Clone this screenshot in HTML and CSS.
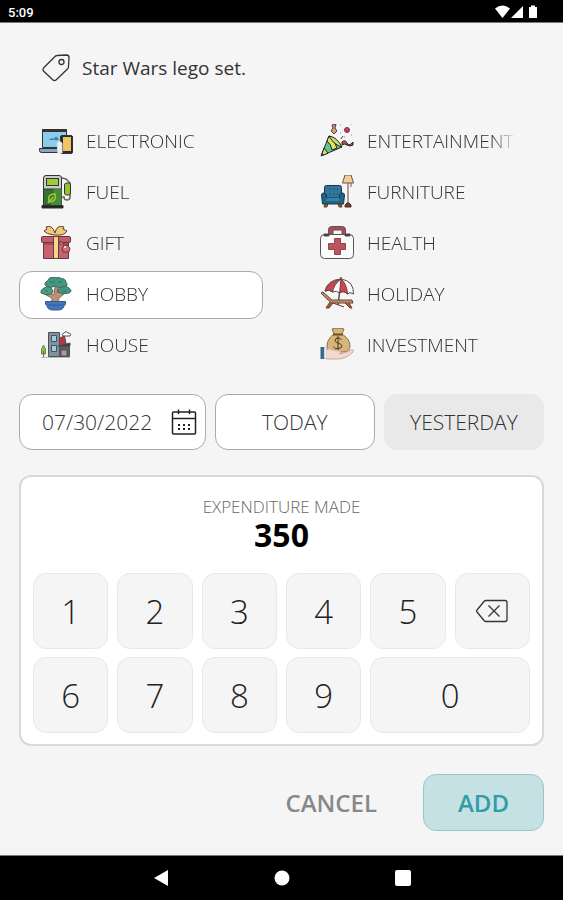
FILE: index.html
```
<!DOCTYPE html>
<html lang="en">
  <head>
    <meta charset="UTF-8" />
    <meta name="viewport" content="width=device-width, initial-scale=1.0" />
    <title>Add expenditure</title>
    <link rel="stylesheet" href="styles.css">
  </head>
  <body>
    <header class="status-bar">
      <span class="clock">5:09</span>
      <svg class="status-icons" width="44" height="14" viewBox="0 0 44 14" fill="#fff">
        <path d="M0 3.500Q7.500-2.500 15 3.500L7.500 13z"/>
        <path d="M28 1v12H16z"/>
        <path d="M34 2h2V0.500h4V2h2v11h-8z"/>
      </svg>
    </header>

    <main class="content">
      <div class="description">
        <svg width="28" height="28" viewBox="0 0 28 28" fill="none" stroke="#333" stroke-width="1.300" stroke-linejoin="round">
          <path d="M15 1.500L24.500 1Q27 1 27 3.500L26.500 12.500Q26.500 14 25.500 15L14 26Q12.500 27 11 26L1.500 17Q0.500 15.500 1.500 14L13 2.500Q14 1.500 15 1.500z"/>
          <circle cx="19.500" cy="8" r="2.500"/>
        </svg>
        <input class="description-input" type="text" value="Star Wars lego set." aria-label="Description">
      </div>

      <div class="categories" role="radiogroup" aria-label="Category">
        <label class="category">
          <input type="radio" name="category" value="electronic">
          <svg class="icon" viewBox="0 0 34 34" stroke="#333" stroke-width="1">
            <path d="M3.500 5.500h24v18h-24z" fill="#8accea"/>
            <path d="M3.500 5.500h24v2h-24z" fill="#333"/>
            <path d="M10 16q2-3 5-1 2-5 5 1z" fill="#467f98" stroke="none"/>
            <path d="M0.500 24.500h20v2q0 2-2 2h-16q-2 0-2-2z" fill="#8ba3c4"/>
            <rect x="21.500" y="11.500" width="12" height="18" rx="1.500" fill="#2c2c36"/>
            <path d="M24 13h8v14h-8z" fill="#f0c465" stroke="none"/>
            <path d="M18 19l2-2 3 2v10h-4z" fill="#eef2f6" stroke="#ddd"/>
          </svg>
          <span class="category-name">ELECTRONIC</span>
        </label>
        <label class="category">
          <input type="radio" name="category" value="entertainment">
          <svg class="icon" viewBox="0 0 34 34" stroke="#222" stroke-width="1">
            <path d="M1 32L9 12Q16 15 22 23z" fill="#62c892"/>
            <path d="M7 17l2-5q6 4 8 12l-5 2q-1-6-5-9zM4 24l4 5-4 2-2-1z" fill="#dfe267"/>
            <path d="M9 12q8 1 13 11-8-2-13-11z" fill="#c6e068"/>
            <path d="M12 1l4-1-1 4 2 3-3 3-3-3 2-3z" fill="#d9a351" stroke="#4b3668"/>
            <circle cx="27" cy="6" r="2.500" fill="#c33f63" stroke="#8a2a4a"/>
            <path d="M22 18q3-3 5 1t6-1l0 3q-3 2-6 0t-5 0z" fill="#b95a50"/>
            <path d="M20 1h1M31 0h1M20 9h1M31 11h1M24 13h1" stroke="#8f86ad" stroke-width="1"/>
            <path d="M21 15l2-3" stroke="#444"/>
          </svg>
          <span class="category-name">ENTERTAINMENT</span>
        </label>

        <label class="category">
          <input type="radio" name="category" value="fuel">
          <svg class="icon" viewBox="0 0 34 34" stroke="#333" stroke-width="1">
            <path d="M4.500 3q0-2.500 2.500-2.500h13q2.500 0 2.500 2.500v27h-18z" fill="#c9cdce"/>
            <path d="M4.500 14h18v16h-18z" fill="#35722f"/>
            <path d="M15 14h7.500v16H12z" fill="#478b38" stroke="none"/>
            <rect x="7.500" y="3.500" width="12" height="7" fill="#9fcb38"/>
            <path d="M3 30.500h21v2.500H3z" fill="#222"/>
            <path d="M10 26q-2-7 6-7 2 7-5 8M9 28l5-6" fill="none" stroke="#a0c83c" stroke-width="1.500"/>
            <path d="M23 3l4 1 4 4v14q0 3-3 3t-3-3H23" fill="none" stroke="#666" stroke-width="1.500"/>
            <path d="M25.500 10q0-2 2-2h2q2 0 2 2v8q0 2-2 2h-2q-2 0-2-2z" fill="#91c534"/>
          </svg>
          <span class="category-name">FUEL</span>
        </label>
        <label class="category">
          <input type="radio" name="category" value="furniture">
          <svg class="icon" viewBox="0 0 34 34" stroke="#17384a" stroke-width="1">
            <path d="M5 28l-1 4h3l1-4zM18 28l1 4h3l-1-4z" fill="#9a5b32" stroke="#6b3d24"/>
            <rect x="4.500" y="10.500" width="17" height="17" rx="2" fill="#2f7699"/>
            <path d="M1.500 20q0-2 2-2t3 2v3h13v-3q1-2 3-2t2 2l-1 9h-21z" fill="#216384"/>
            <path d="M6.500 23h13v3h-13z" fill="#3382a5" stroke="none"/>
            <path d="M9 14h1M13 14h1M17 14h1M9 19h1M13 19h1M17 19h1" stroke="#12445e"/>
            <path d="M28 7v22" stroke="#b19a99" stroke-width="2"/>
            <path d="M25 0h6l2.500 8h-11z" fill="#f0ce98" stroke="#765037"/>
            <path d="M31 8v4" stroke="#765037"/>
            <path d="M25 32v-2l2-2h2l2 2v2z" fill="#6d3e2f" stroke="#4b2b25"/>
          </svg>
          <span class="category-name">FURNITURE</span>
        </label>

        <label class="category">
          <input type="radio" name="category" value="gift">
          <svg class="icon" viewBox="0 0 34 34" stroke="#623b3d" stroke-width="1">
            <path d="M15 9Q7 8 5 5L8 3 7 1q6-3 9 6 2-9 9-6l-1 2 4 2q-3 5-11 4z" fill="#eecb72"/>
            <path d="M4.500 16h25v16.500h-25z" fill="#c9626f"/>
            <path d="M5 16h24v3H5z" fill="#a94b5c" stroke="none"/>
            <rect x="2.500" y="10.500" width="29" height="6" rx="1" fill="#c75b6b"/>
            <path d="M14.500 10.500h5v22h-5z" fill="#f3d788"/>
            <path d="M19 15q5 0 6 5l3-1 3 3-1 4h-6l-1-4 2-2" fill="#d5707b"/>
            <circle cx="26" cy="21" r="1" fill="#fff" stroke="none"/>
          </svg>
          <span class="category-name">GIFT</span>
        </label>
        <label class="category">
          <input type="radio" name="category" value="health">
          <svg class="icon" viewBox="0 0 34 34" stroke="#555" stroke-width="1">
            <path d="M8.500 10V4q0-3.500 3-3.500h11q3 0 3 3.500v6h-3.500V5q0-1-1-1h-7q-1 0-1 1v5z" fill="#b04a5a"/>
            <rect x="0.500" y="8.500" width="33" height="24" rx="4" fill="#fcfcfc"/>
            <path d="M4 8h5v2H4zM25 8h5v2h-5z" fill="#333"/>
            <path d="M14.500 12.500h6v5h5v6h-5v5h-6v-5h-6v-6h6z" fill="#bd5560" stroke="#8d4650"/>
          </svg>
          <span class="category-name">HEALTH</span>
        </label>

        <label class="category">
          <input type="radio" name="category" value="hobby" checked>
          <svg class="icon" viewBox="0 0 34 34" stroke="#42685f" stroke-width="1">
            <path d="M11 26q4-4 0-6l-4-2 2-3 6 3 1-9h3l-1 7 4-2 3 3-5 4q-2 2 2 5z" fill="#bd9272" stroke="#8a6b57"/>
            <path d="M7 9Q4 6 9 3.500q1-4 6-3 5-2 7 1 5 0 5 4 3 3-2 4.500-5 2-9-1-5 3-9 0z" fill="#419880"/>
            <path d="M2 16q-1-3 3-5 4-3 7 0 4 4 0 6-5 2-10-1z" fill="#47a084"/>
            <path d="M19 15q-1-4 4-5 4-2 7 1 4 3 0 5-6 2-11-1z" fill="#419880"/>
            <path d="M11 5h5M19 5h4M6 14h3M24 14h3" stroke="#2f7465"/>
            <path d="M6.500 24.500h20v3h-1q-1 5.500-6 5.500h-6q-5 0-6-5.500h-1z" fill="#4277b8" stroke="#315d96"/>
            <path d="M9 28h15" stroke="#2f5f9d"/>
          </svg>
          <span class="category-name">HOBBY</span>
        </label>
        <label class="category">
          <input type="radio" name="category" value="holiday">
          <svg class="icon" viewBox="0 0 34 34" stroke="#5a4a4b" stroke-width="1">
            <path d="M21 4l-3 24" stroke-width="1.500"/>
            <path d="M5 14Q7 3 21 2q13 2 12.500 15-4-3-6 0-4-4-8-1-3-3-7-1-3-3-7.500-1z" fill="#fbfbfb"/>
            <path d="M5 14Q9 4 21 2q-7 5-8.500 13-3-3-7.500-1zM21 2q6 5 6.500 15-4-4-8-1z" fill="#d2434b"/>
            <path d="M21 0v3" stroke-width="1.500"/>
            <path d="M1 16l2-1 9 8h20l1 3H12q-6-4-11-10z" fill="#c98a58"/>
            <path d="M10 25l-4 6h3l4-5M25 26l5 5h2l-3-5M13 26l11 4" fill="#a05d42" stroke="#6e3b2a"/>
          </svg>
          <span class="category-name">HOLIDAY</span>
        </label>

        <label class="category">
          <input type="radio" name="category" value="house">
          <svg class="icon" viewBox="0 0 34 34" stroke="#4b5058" stroke-width="1">
            <path d="M2 29.500h29" stroke="#bbb"/>
            <path d="M9.500 4.500h11v24h-11z" fill="#8191a0"/>
            <path d="M12.500 7.500h5v6h-5zM12.500 17.500h5v6h-5z" fill="#9ccfdf"/>
            <path d="M20.500 10l5-2 1 5 1 5h-7z" fill="#c0303e"/>
            <path d="M20.500 18.500h10v10h-10z" fill="#595f68"/>
            <path d="M19 18l12-3v3z" fill="#333a44"/>
            <path d="M22 22h6v6h-6z" fill="#b79598"/>
            <path d="M4.500 17l-2 4v5h4v-5z" fill="#93bc54" stroke="#668b45"/>
            <path d="M4.500 23v6" stroke="#79634a"/>
            <path d="M24 8q-2-2 1-3 2-3 4 0 4 0 2 3z" fill="#fff"/>
          </svg>
          <span class="category-name">HOUSE</span>
        </label>
        <label class="category">
          <input type="radio" name="category" value="investment">
          <svg class="icon" viewBox="0 0 34 34" stroke="#857256" stroke-width="1">
            <path d="M14 6L12 1l4-1 2 1 2-1 4 1-2 5q8 5 8 12 0 6-7 6H13q-6 0-6-6 0-7 7-12z" fill="#d9b577"/>
            <path d="M13 6.500h10" stroke="#6c4d24" stroke-width="2"/>
            <path d="M21.500 12q-1-2-3.500-2t-3 2 3 3 4 3-4 2.500-4-2M18 8v14" fill="none" stroke="#493a28"/>
            <path d="M6 22q4-3 7 0l7 1q2 2-1 3 7-1 12-4 4-1 2 2-7 7-15 7H6z" fill="#f3d9d0" stroke="#c9a99f"/>
            <path d="M0.500 19h4v12h-4z" fill="#3a6885" stroke="none"/>
            <path d="M4.500 20h2v10h-2z" fill="#eee" stroke="#ccd7df"/>
          </svg>
          <span class="category-name">INVESTMENT</span>
        </label>
      </div>

      <div class="dates">
        <div class="date-field">
          <input class="date-input" type="text" value="07/30/2022" aria-label="Date">
          <button class="calendar-button" type="button" aria-label="Open calendar">
            <svg width="26" height="28" viewBox="0 0 26 28" fill="none" stroke="#222" stroke-width="1.500">
              <rect x="1.500" y="4" width="23" height="22" rx="1"/>
              <path d="M1.500 10.500h23M7.500 1.500V6M18.500 1.500V6"/>
              <path d="M7 17h2M12 17h2M17 17h2M7 21h2M12 21h2M17 21h2" stroke-width="2"/>
            </svg>
          </button>
        </div>
        <button class="date-button" type="button">TODAY</button>
        <button class="date-button date-button-active" type="button">YESTERDAY</button>
      </div>

      <section class="amount-panel">
        <div class="amount-label">EXPENDITURE MADE</div>
        <div class="amount">350</div>
        <div class="keypad">
          <button class="key" type="button">1</button>
          <button class="key" type="button">2</button>
          <button class="key" type="button">3</button>
          <button class="key" type="button">4</button>
          <button class="key" type="button">5</button>
          <button class="key" type="button" aria-label="Delete">
            <svg width="34" height="24" viewBox="0 0 34 24" fill="none" stroke="#333" stroke-width="1.300" stroke-linejoin="round">
              <path d="M11 1.500h19q2 0 2 2v17q0 2-2 2H11q-1 0-2-1L2 13q-1-1 0-2L9 2.500q1-1 2-1z"/>
              <path d="M13.500 6.500l11 11M24.500 6.500l-11 11"/>
            </svg>
          </button>
          <button class="key" type="button">6</button>
          <button class="key" type="button">7</button>
          <button class="key" type="button">8</button>
          <button class="key" type="button">9</button>
          <button class="key key-wide" type="button">0</button>
        </div>
      </section>

      <div class="actions">
        <button class="cancel-button" type="button">CANCEL</button>
        <button class="add-button" type="button">ADD</button>
      </div>
    </main>

    <nav class="nav-bar">
      <button class="nav-button" type="button" aria-label="Back">
        <svg width="16" height="16" viewBox="0 0 16 16" fill="#fff"><path d="M1 8L15 0v16z"/></svg>
      </button>
      <button class="nav-button" type="button" aria-label="Home">
        <svg width="16" height="16" viewBox="0 0 16 16" fill="#fff"><circle cx="8" cy="8" r="7.500"/></svg>
      </button>
      <button class="nav-button" type="button" aria-label="Recent apps">
        <svg width="16" height="16" viewBox="0 0 16 16" fill="#fff"><rect width="16" height="16" rx="2"/></svg>
      </button>
    </nav>
  </body>
</html>
```
FILE: styles.css
```
* {
  box-sizing: border-box;
}

body {
  margin: 0;
  min-height: 100vh;
  display: flex;
  flex-direction: column;
  font-family: "Open Sans", sans-serif;
  font-weight: 300;
  color: #333;
  background: #f5f5f5;
}

button,
input {
  margin: 0;
  padding: 0;
  border: none;
  background: none;
  font: inherit;
  color: inherit;
}

button {
  cursor: pointer;
}

svg {
  display: block;
  flex-shrink: 0;
}

.status-bar {
  height: 23px;
  padding: 2px 24px 0 8px;
  display: flex;
  align-items: center;
  justify-content: space-between;
  background: #000;
  border-bottom: 1px solid #777;
}

.clock {
  font-family: Roboto, sans-serif;
  font-size: 13px;
  font-weight: 500;
  color: #fff;
}

.content {
  flex: 1;
  padding: 25px 19px 23px;
}

.description {
  height: 40px;
  padding-left: 23px;
  display: flex;
  align-items: center;
  gap: 12px;
}

.description-input {
  flex: 1;
  min-width: 0;
  font-size: 19px;
  font-weight: 400;
}

.categories {
  margin-top: 30px;
  display: grid;
  grid-template-columns: 1fr 1fr;
  gap: 3px 37px;
}

.category {
  height: 48px;
  padding: 0 27px 2px 19px;
  display: flex;
  align-items: center;
  gap: 13px;
  border: 1px solid transparent;
  border-radius: 13px;
  cursor: pointer;
}

.category:has(input:checked) {
  background: #fff;
  border-color: #aaa;
}

.category input {
  position: absolute;
  opacity: 0;
}

.icon {
  width: 34px;
  height: 34px;
  fill: none;
}

.category-name {
  flex: 1;
  min-width: 0;
  font-size: 19px;
  white-space: nowrap;
  overflow: hidden;
  mask-image: linear-gradient(to right, #000 calc(100% - 24px), transparent);
}

.dates {
  margin-top: 24px;
  display: grid;
  grid-template-columns: 7fr 6fr 6fr;
  gap: 9px;
  font-size: 21px;
}

.date-field,
.date-button {
  height: 56px;
  background: #fff;
  border: 1px solid #aaa;
  border-radius: 13px;
}

.date-field {
  min-width: 0;
  padding: 0 8px 0 22px;
  display: flex;
  align-items: center;
}

.date-input {
  flex: 1;
  min-width: 0;
}

.date-button-active {
  background: #e9e9e9;
  border-color: #e9e9e9;
}

.amount-panel {
  margin-top: 25px;
  padding: 19px 12px 11px;
  text-align: center;
  background: #fff;
  border: 2px solid #d8d8d8;
  border-radius: 12px;
}

.amount-label {
  font-size: 17px;
  line-height: 22px;
  color: #666;
}

.amount {
  font-size: 32px;
  font-weight: 700;
  line-height: 34px;
  color: #000;
}

.keypad {
  margin-top: 21px;
  display: grid;
  grid-template-columns: repeat(6, 1fr);
  gap: 8px 9px;
}

.key {
  height: 76px;
  display: flex;
  align-items: center;
  justify-content: center;
  font-size: 33px;
  color: #222;
  background: #f5f5f5;
  border: 1px solid #e8e8e8;
  border-radius: 13px;
}

.key-wide {
  grid-column: span 2;
}

.actions {
  margin-top: 28px;
  display: flex;
  justify-content: flex-end;
  gap: 24px;
}

.cancel-button,
.add-button {
  height: 57px;
  font-size: 24px;
  font-weight: 600;
}

.cancel-button {
  padding: 0 22px;
  color: #888;
}

.add-button {
  width: 121px;
  color: #2f9ea6;
  background: #c5e1e3;
  border: 1px solid #9cc6c6;
  border-radius: 13px;
}

.nav-bar {
  height: 45px;
  padding: 0 100px;
  display: flex;
  align-items: center;
  justify-content: space-around;
  background: #000;
  border-top: 1px solid #777;
}

.nav-button {
  padding: 8px;
}
```
